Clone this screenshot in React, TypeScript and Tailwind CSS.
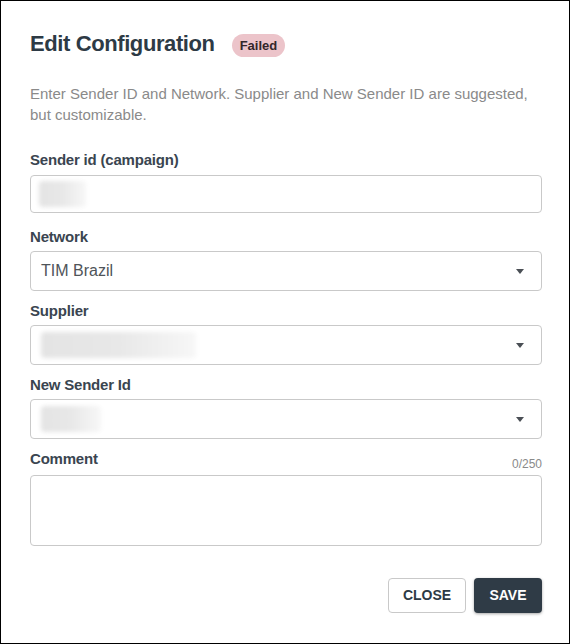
import React from 'react';

const Caret = () => (
  <svg width="8" height="5" viewBox="0 0 8 5" className="shrink-0">
    <path d="M0 0h8L4 5z" fill="#4a4f55" />
  </svg>
);

const Label = ({ children }: { children: React.ReactNode }) => (
  <div className="h-5 text-[15px] leading-5 font-bold tracking-[-0.2px] text-[#3a4550]">{children}</div>
);

const Blur = ({ w }: { w: number }) => (
  <div
    className="h-[26px] rounded-sm bg-gradient-to-r from-[#e4e4e4] via-[#e8e8e8] to-[#f7f7f7] blur-[2px]"
    style={{ width: w }}
  />
);

const SelectBox = ({ children }: { children: React.ReactNode }) => (
  <div className="mt-1 h-10 flex items-center justify-between rounded border border-[#c9c9c9] pl-[10px] pr-[17px]">
    <div className="flex items-center text-[16px] text-[#4f5459]">{children}</div>
    <Caret />
  </div>
);

export default function App() {
  return (
    <div className="w-[570px] h-[644px] border border-black bg-white font-['Liberation_Sans',Arial,sans-serif]">
      <div className="pl-[29px] pr-[27px] pt-[29px]">
        <div className="flex items-center h-7">
          <h1 className="text-[22px] leading-7 font-bold tracking-[-0.4px] text-[#2d3a45]">Edit Configuration</h1>
          <span className="ml-[17px] mt-[3px] h-[23px] px-2 flex items-center rounded-full bg-[#ecc4ca] text-[13px] font-bold text-[#33262a]">
            Failed
          </span>
        </div>

        <p className="mt-[25px] text-[15px] leading-[21px] text-[#8a8a8a]">
          Enter Sender ID and Network. Supplier and New Sender ID are suggested, but customizable.
        </p>

        <div className="mt-[25px]">
          <Label>Sender id (campaign)</Label>
          <div className="mt-[5px] h-[38px] flex items-center rounded border border-[#c9c9c9] pl-[8px]">
            <Blur w={47} />
          </div>
        </div>

        <div className="mt-[14px]">
          <Label>Network</Label>
          <SelectBox>TIM Brazil</SelectBox>
        </div>

        <div className="mt-[10px]">
          <Label>Supplier</Label>
          <SelectBox>
            <Blur w={155} />
          </SelectBox>
        </div>

        <div className="mt-[10px]">
          <Label>New Sender Id</Label>
          <SelectBox>
            <Blur w={60} />
          </SelectBox>
        </div>

        <div className="mt-[10px]">
          <div className="flex justify-between">
            <Label>Comment</Label>
            <span className="mt-[9px] text-[12px] leading-3 text-[#8a8a8a]">0/250</span>
          </div>
          <textarea className="mt-[5px] block w-full h-[71px] resize-none rounded border border-[#c9c9c9] outline-none" />
        </div>

        <div className="mt-[32px] flex justify-end gap-2">
          <button className="h-[35px] w-[78px] rounded border border-[#c9c9c9] bg-white text-[14px] font-bold text-[#2d3a45]">
            CLOSE
          </button>
          <button className="h-[35px] w-[68px] rounded bg-[#2f3b46] text-[14px] font-bold text-white shadow-[0_1px_3px_rgba(0,0,0,0.35)]">
            SAVE
          </button>
        </div>
      </div>
    </div>
  );
}
